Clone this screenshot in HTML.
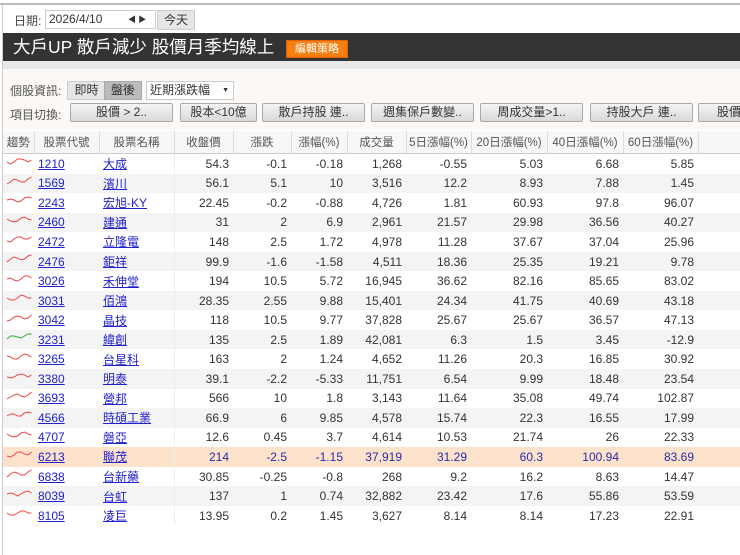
<!DOCTYPE html><html><head><meta charset="utf-8"><style>
body{margin:0;width:740px;height:555px;background:#fff;font-family:"Liberation Sans","Noto Sans CJK TC",sans-serif;font-size:12px;color:#333;overflow:hidden;position:relative}
.abs{position:absolute}
.btn{position:absolute;top:103px;height:17px;border:1px solid #aaa;border-radius:2px;background:linear-gradient(#f4f4f4,#d9d9d9);text-align:center;line-height:17px;font-size:12px;color:#333;overflow:hidden;white-space:nowrap}
table{position:absolute;left:3px;top:131px;border-collapse:collapse;font-size:12px;table-layout:fixed;width:737px}
td{height:19.55px;padding:0 4px;text-align:right;color:#333;white-space:nowrap;overflow:hidden}
th{height:22px;padding:0;font-weight:normal;color:#555;border-right:1px solid #ddd;border-bottom:1px solid #ccc;background:#f7f7f7;white-space:nowrap;overflow:hidden;font-size:11.5px}
tr.g td{background:#f4f4f4}
tr.h td{background:#fde3cc;color:#2a2aa8}
a{color:#2222cc;text-decoration:underline}
td.l{text-align:left}
</style></head><body>
<div class="abs" style="left:0;top:3px;width:740px;height:2px;background:#bbb"></div>
<div class="abs" style="left:2px;top:5px;width:1px;height:550px;background:#ccc"></div>
<div class="abs" style="left:14px;top:12px;color:#444">日期:</div>
<div class="abs" style="left:45px;top:10px;width:106px;height:17px;border:1px solid #ccc;background:#fff;font-size:12px;line-height:17px;padding-left:3px">2026/4/10<span style="position:absolute;left:82px;font-size:8px">◀ ▶</span></div>
<div class="abs" style="left:157px;top:10px;width:36px;height:18px;background:#e6e6e6;border:1px solid #ccc;text-align:center;line-height:18px">今天</div>
<div class="abs" style="left:3px;top:33px;width:737px;height:28px;background:#333"></div>
<div class="abs" style="left:13px;top:36px;color:#fff;font-size:17.5px;line-height:22px">大戶UP 散戶減少 股價月季均線上</div>
<div class="abs" style="left:286px;top:40px;width:60px;height:16px;background:#f77f10;border:1px solid #e06000;color:#fff;font-size:11px;text-align:center;line-height:16px">編輯策略</div>
<div class="abs" style="left:3px;top:61px;width:737px;height:8px;background:#e8e8e8"></div>
<div class="abs" style="left:3px;top:69px;width:737px;height:61px;background:#fbf8f5"></div>
<div class="abs" style="left:10px;top:82px;color:#555">個股資訊:</div>
<div class="abs" style="left:67px;top:81px;width:37px;height:17px;background:#e6e6e6;border:1px solid #ccc;text-align:center;line-height:17px">即時</div>
<div class="abs" style="left:104px;top:81px;width:36px;height:17px;background:#bbb;border:1px solid #aaa;text-align:center;line-height:17px">盤後</div>
<div class="abs" style="left:146px;top:81px;width:83px;height:17px;background:#fff;border:1px solid #ccc;line-height:17px;padding-left:3px">近期漲跌幅 <span style="position:absolute;right:4px;font-size:7px">▼</span></div>
<div class="abs" style="left:10px;top:106px;color:#555">項目切換:</div>
<div class="btn" style="left:70px;width:101px">股價 &gt; 2..</div>
<div class="btn" style="left:180px;width:75px">股本&lt;10億</div>
<div class="btn" style="left:262px;width:101px">散戶持股 連..</div>
<div class="btn" style="left:371px;width:101px">週集保戶數變..</div>
<div class="btn" style="left:480px;width:101px">周成交量&gt;1..</div>
<div class="btn" style="left:590px;width:101px">持股大戶 連..</div>
<div class="btn" style="left:698px;width:60px">股價</div>
<table>
<colgroup><col style="width:31px"><col style="width:65px"><col style="width:75px"><col style="width:59px"><col style="width:58px"><col style="width:56px"><col style="width:59px"><col style="width:65px"><col style="width:76px"><col style="width:76px"><col style="width:75px"><col style="width:42px"></colgroup>
<tr><th>趨勢</th><th>股票代號</th><th>股票名稱</th><th>收盤價</th><th>漲跌</th><th>漲幅(%)</th><th>成交量</th><th>5日漲幅(%)</th><th>20日漲幅(%)</th><th>40日漲幅(%)</th><th>60日漲幅(%)</th><th style="border-right:none"></th></tr>
<tbody id="b"></tbody></table>
<script>
var d=[["1210","大成","54.3","-0.1","-0.18","1,268","-0.55","5.03","6.68","5.85"],
["1569","濱川","56.1","5.1","10","3,516","12.2","8.93","7.88","1.45"],
["2243","宏旭-KY","22.45","-0.2","-0.88","4,726","1.81","60.93","97.8","96.07"],
["2460","建通","31","2","6.9","2,961","21.57","29.98","36.56","40.27"],
["2472","立隆電","148","2.5","1.72","4,978","11.28","37.67","37.04","25.96"],
["2476","鉅祥","99.9","-1.6","-1.58","4,511","18.36","25.35","19.21","9.78"],
["3026","禾伸堂","194","10.5","5.72","16,945","36.62","82.16","85.65","83.02"],
["3031","佰鴻","28.35","2.55","9.88","15,401","24.34","41.75","40.69","43.18"],
["3042","晶技","118","10.5","9.77","37,828","25.67","25.67","36.57","47.13"],
["3231","緯創","135","2.5","1.89","42,081","6.3","1.5","3.45","-12.9"],
["3265","台星科","163","2","1.24","4,652","11.26","20.3","16.85","30.92"],
["3380","明泰","39.1","-2.2","-5.33","11,751","6.54","9.99","18.48","23.54"],
["3693","營邦","566","10","1.8","3,143","11.64","35.08","49.74","102.87"],
["4566","時碩工業","66.9","6","9.85","4,578","15.74","22.3","16.55","17.99"],
["4707","磐亞","12.6","0.45","3.7","4,614","10.53","21.74","26","22.33"],
["6213","聯茂","214","-2.5","-1.15","37,919","31.29","60.3","100.94","83.69"],
["6838","台新藥","30.85","-0.25","-0.8","268","9.2","16.2","8.63","14.47"],
["8039","台虹","137","1","0.74","32,882","23.42","17.6","55.86","53.59"],
["8105","凌巨","13.95","0.2","1.45","3,627","8.14","8.14","17.23","22.91"]];
var h="";d.forEach(function(r,i){var c=i==15?"h":(i%2?"g":"");var col=i==9?"#3a3":"#e44";
var p="";for(var k=0;k<8;k++){p+=(2+k*3.5)+","+(6+Math.round(Math.sin(i*1.7+k*1.3)*2-k*0.4))+" ";}
h+='<tr class="'+c+'"><td class="l" style="padding:0 0 0 2px"><svg width="28" height="12"><polyline points="'+p+'" fill="none" stroke="'+col+'" stroke-width="1"/></svg></td><td class="l"><a>'+r[0]+'</a></td><td class="l" style="border-right:1px solid #eee"><a>'+r[1]+'</a></td>';
for(var j=2;j<10;j++)h+='<td>'+r[j]+'</td>';h+='<td></td></tr>';});
document.getElementById("b").innerHTML=h;
</script>
</body></html>
